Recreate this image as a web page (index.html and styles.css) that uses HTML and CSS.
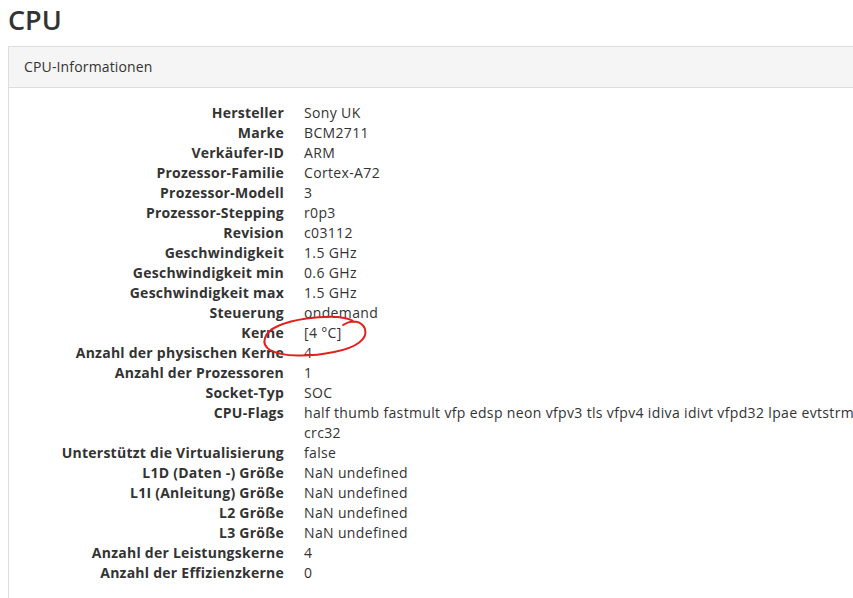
FILE: index.html
```html
<!DOCTYPE html>
<html lang="de">
<head>
<meta charset="utf-8">
<title>CPU</title>
<link rel="stylesheet" href="styles.css">
</head>
<body>
<div class="page">
  <h1 class="title">CPU</h1>
  <div class="panel">
    <div class="panel-heading">CPU-Informationen</div>
    <div class="panel-body">
      <dl class="info">
        <dt>Hersteller</dt><dd>Sony UK</dd>
        <dt>Marke</dt><dd>BCM2711</dd>
        <dt>Verkäufer-ID</dt><dd>ARM</dd>
        <dt>Prozessor-Familie</dt><dd>Cortex-A72</dd>
        <dt>Prozessor-Modell</dt><dd>3</dd>
        <dt>Prozessor-Stepping</dt><dd>r0p3</dd>
        <dt>Revision</dt><dd>c03112</dd>
        <dt>Geschwindigkeit</dt><dd>1.5 GHz</dd>
        <dt>Geschwindigkeit min</dt><dd>0.6 GHz</dd>
        <dt>Geschwindigkeit max</dt><dd>1.5 GHz</dd>
        <dt>Steuerung</dt><dd>ondemand</dd>
        <dt>Kerne</dt><dd>[4 °C]</dd>
        <dt>Anzahl der physischen Kerne</dt><dd>4</dd>
        <dt>Anzahl der Prozessoren</dt><dd>1</dd>
        <dt>Socket-Typ</dt><dd>SOC</dd>
        <dt>CPU-Flags</dt><dd>half thumb fastmult vfp edsp neon vfpv3 tls vfpv4 idiva idivt vfpd32 lpae evtstrm crc32</dd>
        <dt>Unterstützt die Virtualisierung</dt><dd>false</dd>
        <dt>L1D (Daten -) Größe</dt><dd>NaN undefined</dd>
        <dt>L1I (Anleitung) Größe</dt><dd>NaN undefined</dd>
        <dt>L2 Größe</dt><dd>NaN undefined</dd>
        <dt>L3 Größe</dt><dd>NaN undefined</dd>
        <dt>Anzahl der Leistungskerne</dt><dd>4</dd>
        <dt>Anzahl der Effizienzkerne</dt><dd>0</dd>
      </dl>
    </div>
  </div>
  <svg class="scribble" width="853" height="598" viewBox="0 0 853 598" aria-hidden="true">
    <path d="M343 325 C352 319 362 321 365 329 C368 339 356 348 334 352 C310 357 282 357 270 350 C260 344 264 332 278 326 C294 319 318 316 338 317 C346 318 352 319 354 322" fill="none" stroke="#e0211d" stroke-width="2" stroke-linecap="round" stroke-linejoin="round"/>
  </svg>
</div>
</body>
</html>
```

FILE: styles.css
```css
html, body {
  margin: 0;
  padding: 0;
  background: #ffffff;
  overflow: hidden;
}

.page {
  position: relative;
  width: 853px;
  height: 598px;
  padding: 4px 0 0 8px;
  box-sizing: border-box;
  font-family: "Open Sans", "Liberation Sans", sans-serif;
  color: #333333;
}

.title {
  margin: 0 0 10px 0;
  font-size: 27px;
  line-height: 32px;
  font-weight: 600;
  color: #333333;
}

.panel {
  width: 920px;
  border: 1px solid #dddddd;
  border-right: none;
  background: #ffffff;
  padding-bottom: 40px;
}

.panel-heading {
  background: #f5f5f5;
  border-bottom: 1px solid #dddddd;
  padding: 10px 15px;
  font-size: 14px;
  line-height: 20px;
  letter-spacing: 0.15px;
  color: #333333;
}

.panel-body {
  padding: 15px 0 0 0;
}

.info {
  margin: 0;
  display: grid;
  grid-template-columns: 275px 575px;
  column-gap: 20px;
  font-size: 14px;
  line-height: 20px;
}

.info dt {
  text-align: right;
  font-weight: 700;
  letter-spacing: 0.25px;
}

.info dd {
  margin: 0;
  letter-spacing: 0.35px;
}

.scribble {
  position: absolute;
  left: 0;
  top: 0;
  pointer-events: none;
}
```
